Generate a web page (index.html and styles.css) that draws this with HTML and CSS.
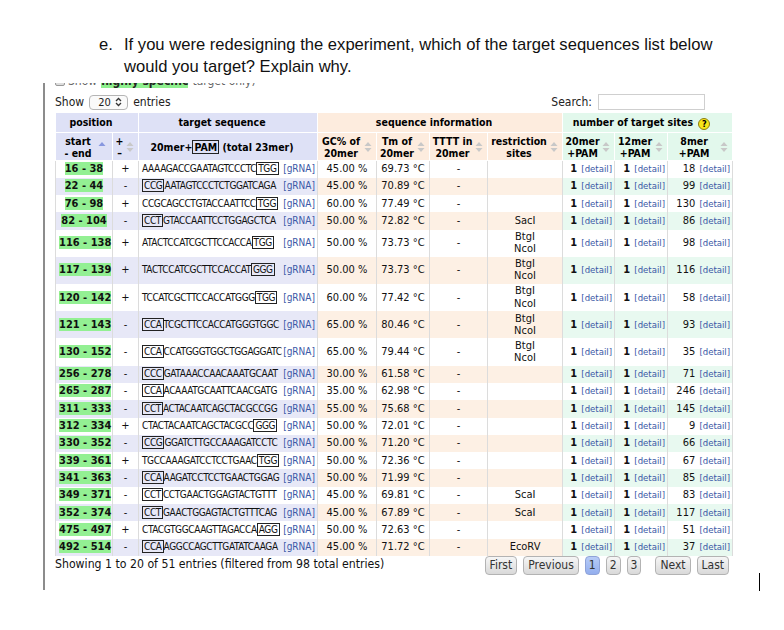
FILE: index.html
```html
<!DOCTYPE html>
<html>
<head>
<meta charset="utf-8">
<link rel="stylesheet" href="styles.css">
</head>
<body>
<div class="question">
  <span class="qlabel">e.</span>
  <div class="qtext">If you were redesigning the experiment, which of the target sequences list below<br>would you target? Explain why.</div>
</div>
<div class="shot">
  <div class="cut"><div class="cut-line"><span class="cb"></span>Show <b class="hs">highly specific</b> target only)</div></div>
  <div class="controls">
    <div class="len">Show <span class="sel">20 <svg class="updown" width="7" height="10" viewBox="0 0 7 10"><path d="M1 4 L3.5 1.5 L6 4" fill="none" stroke="#333" stroke-width="1.3"/><path d="M1 6 L3.5 8.5 L6 6" fill="none" stroke="#333" stroke-width="1.3"/></svg></span> entries</div>
    <div class="search">Search: <span class="inp"></span></div>
  </div>
  <table class="grid">
    <colgroup>
      <col class="w-pos"><col class="w-str"><col class="w-seq"><col class="w-gc"><col class="w-tm"><col class="w-tt"><col class="w-rs"><col class="w-20"><col class="w-12"><col class="w-8">
    </colgroup>
    <thead>
      <tr class="h1">
        <th colspan="2" class="lav">position</th>
        <th class="lav">target sequence</th>
        <th colspan="4" class="pch">sequence information</th>
        <th colspan="3" class="mnt">number of target sites <span class="help">?</span></th>
      </tr>
      <tr class="h2">
        <th class="lav">start<br>- end<svg class="sort asc" width="8" height="12" viewBox="0 0 8 12"><path d="M0.5 5 L4 1 L7.5 5 Z" fill="#8797df"/></svg></th>
        <th class="lav">+<br>&ndash;<svg class="sort" width="8" height="12" viewBox="0 0 8 12"><path d="M0.5 5 L4 1 L7.5 5 Z M0.5 7 L4 11 L7.5 7 Z" fill="#c8c8c8"/></svg></th>
        <th class="lav">20mer+<span class="pam">PAM</span> (total 23mer)</th>
        <th class="pch">GC% of<br>20mer<svg class="sort" width="8" height="12" viewBox="0 0 8 12"><path d="M0.5 5 L4 1 L7.5 5 Z M0.5 7 L4 11 L7.5 7 Z" fill="#c8c8c8"/></svg></th>
        <th class="pch">Tm of<br>20mer<svg class="sort" width="8" height="12" viewBox="0 0 8 12"><path d="M0.5 5 L4 1 L7.5 5 Z M0.5 7 L4 11 L7.5 7 Z" fill="#c8c8c8"/></svg></th>
        <th class="pch">TTTT in<br>20mer<svg class="sort" width="8" height="12" viewBox="0 0 8 12"><path d="M0.5 5 L4 1 L7.5 5 Z M0.5 7 L4 11 L7.5 7 Z" fill="#c8c8c8"/></svg></th>
        <th class="pch">restriction<br>sites<svg class="sort" width="8" height="12" viewBox="0 0 8 12"><path d="M0.5 5 L4 1 L7.5 5 Z M0.5 7 L4 11 L7.5 7 Z" fill="#c8c8c8"/></svg></th>
        <th class="mnt">20mer<br>+PAM<svg class="sort" width="8" height="12" viewBox="0 0 8 12"><path d="M0.5 5 L4 1 L7.5 5 Z M0.5 7 L4 11 L7.5 7 Z" fill="#c8c8c8"/></svg></th>
        <th class="mnt">12mer<br>+PAM<svg class="sort" width="8" height="12" viewBox="0 0 8 12"><path d="M0.5 5 L4 1 L7.5 5 Z M0.5 7 L4 11 L7.5 7 Z" fill="#c8c8c8"/></svg></th>
        <th class="mnt">8mer<br>+PAM<svg class="sort" width="8" height="12" viewBox="0 0 8 12"><path d="M0.5 5 L4 1 L7.5 5 Z M0.5 7 L4 11 L7.5 7 Z" fill="#c8c8c8"/></svg></th>
      </tr>
    </thead>
    <tbody>
      <tr><td class="c-pos"><span class="hl">16 - 38</span></td><td class="c-str">+</td><td class="c-seq"><div class="seq"><span>AAAAGACCGAATAGTCCCTC<span class="pam">TGG</span></span><a class="g">[gRNA]</a></div></td><td class="c-gc">45.00 %</td><td class="c-tm">69.73 °C</td><td class="c-tt">-</td><td class="c-rs"></td><td class="c-20"><b>1</b> <a class="d">[detail]</a></td><td class="c-12"><b>1</b> <a class="d">[detail]</a></td><td class="c-8">18 <a class="d">[detail]</a></td></tr>
      <tr><td class="c-pos"><span class="hl">22 - 44</span></td><td class="c-str">-</td><td class="c-seq"><div class="seq"><span><span class="pam">CCG</span>AATAGTCCCTCTGGATCAGA</span><a class="g">[gRNA]</a></div></td><td class="c-gc">45.00 %</td><td class="c-tm">70.89 °C</td><td class="c-tt">-</td><td class="c-rs"></td><td class="c-20"><b>1</b> <a class="d">[detail]</a></td><td class="c-12"><b>1</b> <a class="d">[detail]</a></td><td class="c-8">99 <a class="d">[detail]</a></td></tr>
      <tr><td class="c-pos"><span class="hl">76 - 98</span></td><td class="c-str">+</td><td class="c-seq"><div class="seq"><span>CCGCAGCCTGTACCAATTCC<span class="pam">TGG</span></span><a class="g">[gRNA]</a></div></td><td class="c-gc">60.00 %</td><td class="c-tm">77.49 °C</td><td class="c-tt">-</td><td class="c-rs"></td><td class="c-20"><b>1</b> <a class="d">[detail]</a></td><td class="c-12"><b>1</b> <a class="d">[detail]</a></td><td class="c-8">130 <a class="d">[detail]</a></td></tr>
      <tr><td class="c-pos"><span class="hl">82 - 104</span></td><td class="c-str">-</td><td class="c-seq"><div class="seq"><span><span class="pam">CCT</span>GTACCAATTCCTGGAGCTCA</span><a class="g">[gRNA]</a></div></td><td class="c-gc">50.00 %</td><td class="c-tm">72.82 °C</td><td class="c-tt">-</td><td class="c-rs">SacI</td><td class="c-20"><b>1</b> <a class="d">[detail]</a></td><td class="c-12"><b>1</b> <a class="d">[detail]</a></td><td class="c-8">86 <a class="d">[detail]</a></td></tr>
      <tr><td class="c-pos"><span class="hl">116 - 138</span></td><td class="c-str">+</td><td class="c-seq"><div class="seq"><span>ATACTCCATCGCTTCCACCA<span class="pam">TGG</span></span><a class="g">[gRNA]</a></div></td><td class="c-gc">50.00 %</td><td class="c-tm">73.73 °C</td><td class="c-tt">-</td><td class="c-rs">BtgI<br>NcoI</td><td class="c-20"><b>1</b> <a class="d">[detail]</a></td><td class="c-12"><b>1</b> <a class="d">[detail]</a></td><td class="c-8">98 <a class="d">[detail]</a></td></tr>
      <tr><td class="c-pos"><span class="hl">117 - 139</span></td><td class="c-str">+</td><td class="c-seq"><div class="seq"><span>TACTCCATCGCTTCCACCAT<span class="pam">GGG</span></span><a class="g">[gRNA]</a></div></td><td class="c-gc">50.00 %</td><td class="c-tm">73.73 °C</td><td class="c-tt">-</td><td class="c-rs">BtgI<br>NcoI</td><td class="c-20"><b>1</b> <a class="d">[detail]</a></td><td class="c-12"><b>1</b> <a class="d">[detail]</a></td><td class="c-8">116 <a class="d">[detail]</a></td></tr>
      <tr><td class="c-pos"><span class="hl">120 - 142</span></td><td class="c-str">+</td><td class="c-seq"><div class="seq"><span>TCCATCGCTTCCACCATGGG<span class="pam">TGG</span></span><a class="g">[gRNA]</a></div></td><td class="c-gc">60.00 %</td><td class="c-tm">77.42 °C</td><td class="c-tt">-</td><td class="c-rs">BtgI<br>NcoI</td><td class="c-20"><b>1</b> <a class="d">[detail]</a></td><td class="c-12"><b>1</b> <a class="d">[detail]</a></td><td class="c-8">58 <a class="d">[detail]</a></td></tr>
      <tr><td class="c-pos"><span class="hl">121 - 143</span></td><td class="c-str">-</td><td class="c-seq"><div class="seq"><span><span class="pam">CCA</span>TCGCTTCCACCATGGGTGGC</span><a class="g">[gRNA]</a></div></td><td class="c-gc">65.00 %</td><td class="c-tm">80.46 °C</td><td class="c-tt">-</td><td class="c-rs">BtgI<br>NcoI</td><td class="c-20"><b>1</b> <a class="d">[detail]</a></td><td class="c-12"><b>1</b> <a class="d">[detail]</a></td><td class="c-8">93 <a class="d">[detail]</a></td></tr>
      <tr><td class="c-pos"><span class="hl">130 - 152</span></td><td class="c-str">-</td><td class="c-seq"><div class="seq"><span><span class="pam">CCA</span>CCATGGGTGGCTGGAGGATC</span><a class="g">[gRNA]</a></div></td><td class="c-gc">65.00 %</td><td class="c-tm">79.44 °C</td><td class="c-tt">-</td><td class="c-rs">BtgI<br>NcoI</td><td class="c-20"><b>1</b> <a class="d">[detail]</a></td><td class="c-12"><b>1</b> <a class="d">[detail]</a></td><td class="c-8">35 <a class="d">[detail]</a></td></tr>
      <tr><td class="c-pos"><span class="hl">256 - 278</span></td><td class="c-str">-</td><td class="c-seq"><div class="seq"><span><span class="pam">CCC</span>GATAAACCAACAAATGCAAT</span><a class="g">[gRNA]</a></div></td><td class="c-gc">30.00 %</td><td class="c-tm">61.58 °C</td><td class="c-tt">-</td><td class="c-rs"></td><td class="c-20"><b>1</b> <a class="d">[detail]</a></td><td class="c-12"><b>1</b> <a class="d">[detail]</a></td><td class="c-8">71 <a class="d">[detail]</a></td></tr>
      <tr><td class="c-pos"><span class="hl">265 - 287</span></td><td class="c-str">-</td><td class="c-seq"><div class="seq"><span><span class="pam">CCA</span>ACAAATGCAATTCAACGATG</span><a class="g">[gRNA]</a></div></td><td class="c-gc">35.00 %</td><td class="c-tm">62.98 °C</td><td class="c-tt">-</td><td class="c-rs"></td><td class="c-20"><b>1</b> <a class="d">[detail]</a></td><td class="c-12"><b>1</b> <a class="d">[detail]</a></td><td class="c-8">246 <a class="d">[detail]</a></td></tr>
      <tr><td class="c-pos"><span class="hl">311 - 333</span></td><td class="c-str">-</td><td class="c-seq"><div class="seq"><span><span class="pam">CCT</span>ACTACAATCAGCTACGCCGG</span><a class="g">[gRNA]</a></div></td><td class="c-gc">55.00 %</td><td class="c-tm">75.68 °C</td><td class="c-tt">-</td><td class="c-rs"></td><td class="c-20"><b>1</b> <a class="d">[detail]</a></td><td class="c-12"><b>1</b> <a class="d">[detail]</a></td><td class="c-8">145 <a class="d">[detail]</a></td></tr>
      <tr><td class="c-pos"><span class="hl">312 - 334</span></td><td class="c-str">+</td><td class="c-seq"><div class="seq"><span>CTACTACAATCAGCTACGCC<span class="pam">GGG</span></span><a class="g">[gRNA]</a></div></td><td class="c-gc">50.00 %</td><td class="c-tm">72.01 °C</td><td class="c-tt">-</td><td class="c-rs"></td><td class="c-20"><b>1</b> <a class="d">[detail]</a></td><td class="c-12"><b>1</b> <a class="d">[detail]</a></td><td class="c-8">9 <a class="d">[detail]</a></td></tr>
      <tr><td class="c-pos"><span class="hl">330 - 352</span></td><td class="c-str">-</td><td class="c-seq"><div class="seq"><span><span class="pam">CCG</span>GGATCTTGCCAAAGATCCTC</span><a class="g">[gRNA]</a></div></td><td class="c-gc">50.00 %</td><td class="c-tm">71.20 °C</td><td class="c-tt">-</td><td class="c-rs"></td><td class="c-20"><b>1</b> <a class="d">[detail]</a></td><td class="c-12"><b>1</b> <a class="d">[detail]</a></td><td class="c-8">66 <a class="d">[detail]</a></td></tr>
      <tr><td class="c-pos"><span class="hl">339 - 361</span></td><td class="c-str">+</td><td class="c-seq"><div class="seq"><span>TGCCAAAGATCCTCCTGAAC<span class="pam">TGG</span></span><a class="g">[gRNA]</a></div></td><td class="c-gc">50.00 %</td><td class="c-tm">72.36 °C</td><td class="c-tt">-</td><td class="c-rs"></td><td class="c-20"><b>1</b> <a class="d">[detail]</a></td><td class="c-12"><b>1</b> <a class="d">[detail]</a></td><td class="c-8">67 <a class="d">[detail]</a></td></tr>
      <tr><td class="c-pos"><span class="hl">341 - 363</span></td><td class="c-str">-</td><td class="c-seq"><div class="seq"><span><span class="pam">CCA</span>AAGATCCTCCTGAACTGGAG</span><a class="g">[gRNA]</a></div></td><td class="c-gc">50.00 %</td><td class="c-tm">71.99 °C</td><td class="c-tt">-</td><td class="c-rs"></td><td class="c-20"><b>1</b> <a class="d">[detail]</a></td><td class="c-12"><b>1</b> <a class="d">[detail]</a></td><td class="c-8">85 <a class="d">[detail]</a></td></tr>
      <tr><td class="c-pos"><span class="hl">349 - 371</span></td><td class="c-str">-</td><td class="c-seq"><div class="seq"><span><span class="pam">CCT</span>CCTGAACTGGAGTACTGTTT</span><a class="g">[gRNA]</a></div></td><td class="c-gc">45.00 %</td><td class="c-tm">69.81 °C</td><td class="c-tt">-</td><td class="c-rs">ScaI</td><td class="c-20"><b>1</b> <a class="d">[detail]</a></td><td class="c-12"><b>1</b> <a class="d">[detail]</a></td><td class="c-8">83 <a class="d">[detail]</a></td></tr>
      <tr><td class="c-pos"><span class="hl">352 - 374</span></td><td class="c-str">-</td><td class="c-seq"><div class="seq"><span><span class="pam">CCT</span>GAACTGGAGTACTGTTTCAG</span><a class="g">[gRNA]</a></div></td><td class="c-gc">45.00 %</td><td class="c-tm">67.89 °C</td><td class="c-tt">-</td><td class="c-rs">ScaI</td><td class="c-20"><b>1</b> <a class="d">[detail]</a></td><td class="c-12"><b>1</b> <a class="d">[detail]</a></td><td class="c-8">117 <a class="d">[detail]</a></td></tr>
      <tr><td class="c-pos"><span class="hl">475 - 497</span></td><td class="c-str">+</td><td class="c-seq"><div class="seq"><span>CTACGTGGCAAGTTAGACCA<span class="pam">AGG</span></span><a class="g">[gRNA]</a></div></td><td class="c-gc">50.00 %</td><td class="c-tm">72.63 °C</td><td class="c-tt">-</td><td class="c-rs"></td><td class="c-20"><b>1</b> <a class="d">[detail]</a></td><td class="c-12"><b>1</b> <a class="d">[detail]</a></td><td class="c-8">51 <a class="d">[detail]</a></td></tr>
      <tr><td class="c-pos"><span class="hl">492 - 514</span></td><td class="c-str">-</td><td class="c-seq"><div class="seq"><span><span class="pam">CCA</span>AGGCCAGCTTGATATCAAGA</span><a class="g">[gRNA]</a></div></td><td class="c-gc">45.00 %</td><td class="c-tm">71.72 °C</td><td class="c-tt">-</td><td class="c-rs">EcoRV</td><td class="c-20"><b>1</b> <a class="d">[detail]</a></td><td class="c-12"><b>1</b> <a class="d">[detail]</a></td><td class="c-8">37 <a class="d">[detail]</a></td></tr>
    </tbody>
  </table>
  <div class="foot">
    <div class="info">Showing 1 to 20 of 51 entries (filtered from 98 total entries)</div>
    <div class="pager">
      <span class="btn">First</span>
      <span class="btn">Previous</span>
      <span class="btn num cur">1</span>
      <span class="btn num">2</span>
      <span class="btn num">3</span>
      <span class="btn next">Next</span>
      <span class="btn">Last</span>
    </div>
    <span class="caret"></span>
  </div>
</div>
</body>
</html>
```
FILE: styles.css
```css
html, body {
  margin: 0;
  padding: 0;
  background: #ffffff;
}
body {
  width: 784px;
  height: 630px;
  overflow: hidden;
  font-family: "DejaVu Sans", Verdana, sans-serif;
  font-stretch: condensed;
  color: #111;
}

/* question */
.question {
  display: flex;
  padding: 34px 0 0 99px;
  height: 49px;
  font-family: "Liberation Sans", Arial, sans-serif;
  font-stretch: normal;
  font-size: 16.6px;
  line-height: 22px;
  color: #111;
}
.qlabel {
  width: 25px;
  flex: none;
}

/* screenshot area */
.shot {
  margin-left: 43px;
  border-left: 2px solid #8c8c8c;
  padding-left: 10px;
  height: 507px;
  box-sizing: border-box;
  position: relative;
}
.cut {
  height: 6px;
  overflow: hidden;
}
.cut-line {
  margin-top: -9px;
  font-size: 12px;
  line-height: 14px;
  color: #666;
  display: flex;
  align-items: center;
}
.cb {
  display: inline-block;
  width: 8px;
  height: 8px;
  border: 1px solid #999;
  background: #ddd;
  border-radius: 2px;
  margin-right: 3px;
}
.hs {
  background: #8ef08e;
  color: #222;
  margin: 0 4px;
}
.controls {
  width: 650px;
  height: 23px;
  box-sizing: border-box;
  padding-top: 3px;
  display: flex;
  justify-content: space-between;
  align-items: center;
  font-size: 12px;
  color: #222;
}
.len, .search {
  display: flex;
  align-items: center;
}
.sel {
  display: inline-flex;
  align-items: center;
  justify-content: space-between;
  box-sizing: border-box;
  width: 39px;
  height: 15px;
  margin: 0 5px;
  padding: 0 5px 0 8px;
  border: 1px solid #b5b5b5;
  border-radius: 4px;
  background: #fafafa;
  font-size: 11px;
}
.inp {
  display: inline-block;
  width: 107px;
  height: 16px;
  box-sizing: border-box;
  margin-left: 6px;
  border: 1px solid #cfcfcf;
  background: #fff;
}

/* table */
.grid {
  width: 677px;
  table-layout: fixed;
  border-collapse: collapse;
  font-size: 11px;
}
.w-pos { width: 57px; }
.w-str { width: 26px; }
.w-seq { width: 179px; }
.w-gc { width: 59px; }
.w-tm { width: 53px; }
.w-tt { width: 58px; }
.w-rs { width: 75px; }
.w-20 { width: 52px; }
.w-12 { width: 53px; }
.w-8 { width: 65px; }

.grid th {
  position: relative;
  font-weight: bold;
  font-size: 10.5px;
  color: #000;
  text-align: center;
  border: 1px solid #fff;
  padding: 0 14px 0 2px;
}
.h1 th {
  height: 20px;
  box-sizing: border-box;
  line-height: 13px;
}
.h2 th {
  height: 28px;
  box-sizing: border-box;
  line-height: 12px;
}
.lav { background: #dee1f6; }
.pch { background: #fdecde; }
.mnt { background: #e2f8ec; }

.sort {
  position: absolute;
  right: 4px;
  top: 50%;
  margin-top: -6px;
}
.sort.asc {
  right: 6px;
}
.help {
  display: inline-block;
  width: 12px;
  height: 12px;
  box-sizing: border-box;
  border-radius: 50%;
  border: 1px solid #8b7d10;
  background: #f7e51a;
  color: #000;
  font-size: 9px;
  line-height: 10px;
  text-align: center;
  vertical-align: -1px;
  margin-left: 2px;
}

tbody tr {
  height: 17.3px;
}
.grid td {
  padding: 1.3px 3px;
  line-height: 12.3px;
  border-right: 1px solid #dcdcdc;
  background: #fff;
  text-align: center;
  white-space: nowrap;
  overflow: hidden;
}
.grid td.c-pos { border-left: 1px solid #dcdcdc; font-weight: bold; }
tbody tr:nth-child(even) .c-pos,
tbody tr:nth-child(even) .c-str,
tbody tr:nth-child(even) .c-seq { background: #e7e8f7; }
tbody tr:nth-child(even) .c-gc,
tbody tr:nth-child(even) .c-tm,
tbody tr:nth-child(even) .c-tt,
tbody tr:nth-child(even) .c-rs { background: #fdf0e4; }
tbody tr:nth-child(even) .c-20,
tbody tr:nth-child(even) .c-12,
tbody tr:nth-child(even) .c-8 { background: #e8f9f0; }

.hl {
  background: #93f093;
}
.grid td.c-seq {
  text-align: left;
  padding: 1.3px 2px 1.3px 3px;
}
.seq {
  display: flex;
  justify-content: space-between;
  font-size: 10px;
  letter-spacing: -0.38px;
}
.pam {
  border: 1px solid #222;
  padding: 0 1px;
}
.g, .d {
  color: #3a58a6;
  letter-spacing: 0;
  font-size: 10px;
}
.d {
  font-size: 9.5px;
  margin-left: 1px;
}
.grid td.c-20, .grid td.c-12, .grid td.c-8 {
  text-align: right;
  padding-right: 2px;
}

/* footer */
.foot {
  width: 677px;
  display: flex;
  justify-content: space-between;
  align-items: flex-start;
}
.info {
  font-size: 12.2px;
  line-height: 14px;
  margin-top: 1px;
  color: #111;
}
.pager {
  display: flex;
  gap: 6px;
  margin-right: 3px;
}
.btn {
  display: inline-block;
  height: 19px;
  box-sizing: border-box;
  padding: 0 4px;
  line-height: 17px;
  font-size: 12px;
  color: #333;
  border: 1px solid #b3b3b3;
  border-radius: 4px;
  background: linear-gradient(#f6f6f6, #d9d9d9);
}
.num {
  padding: 0 3px;
}
.next {
  margin-left: 8px;
}
.cur {
  background: linear-gradient(#b7ccf7, #93aeee);
  border-color: #8fa3d8;
}
.caret {
  position: absolute;
  left: 714px;
  top: 490px;
  width: 1px;
  height: 18px;
  background: #000;
}
```
